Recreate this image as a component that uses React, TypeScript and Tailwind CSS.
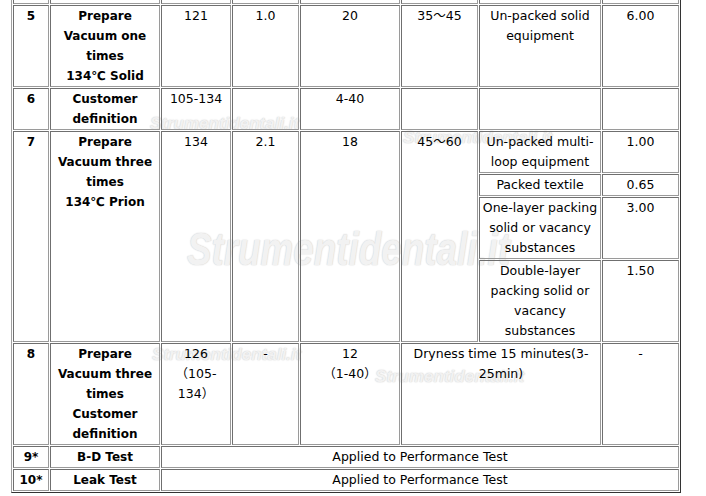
import React from "react";

const cell =
  "border border-[#6f6f6f] border-r-[#9a9a9a] border-b-[#9a9a9a] px-[1px] py-0 align-top text-center leading-[20px] whitespace-nowrap";
const head = `${cell} font-bold text-[12px]`;
const body = `${cell} text-[12.5px]`;

const mark =
  "absolute pointer-events-none select-none whitespace-nowrap font-['Liberation_Sans',sans-serif] font-bold italic leading-none text-[#efefef] opacity-80 [text-shadow:0_0_1px_#c4c4c4,0_0_2px_#dcdcdc]";

const App = () => {
  return (
    <div className="relative h-[496px] w-[706px] overflow-hidden bg-white text-black font-['DejaVu_Sans','Noto_Sans_CJK_JP',sans-serif]">
      {/* watermarks sit under the table text */}
      <span className={`${mark} left-[150px] top-[115px] text-[17px]`}>Strumentidentali.it</span>
      <span className={`${mark} left-[403px] top-[129px] text-[17px]`}>Strumentidentali.it</span>
      <span className={`${mark} left-[187px] top-[226px] origin-left scale-x-[0.8] text-[46px]`}>
        Strumentidentali.it
      </span>
      <span className={`${mark} left-[152px] top-[346px] text-[17px]`}>Strumentidentali.it</span>
      <span className={`${mark} left-[375px] top-[368px] text-[17px]`}>Strumentidentali.it</span>

      <table className="relative ml-[11px] mt-[-20px] w-[670px] table-fixed border-separate border-spacing-[1px] border border-t-[#a0a0a0] border-l-[#a0a0a0] border-r-[#333] border-b-[#333]">
        <tbody>
          <tr>
            <td className={`${body} w-[36px]`}>&nbsp;</td>
            <td className={`${body} w-[110px]`}>&nbsp;</td>
            <td className={`${body} w-[70px]`}>&nbsp;</td>
            <td className={`${body} w-[67px]`}>&nbsp;</td>
            <td className={`${body} w-[100px]`}>&nbsp;</td>
            <td className={`${body} w-[77px]`}>&nbsp;</td>
            <td className={`${body} w-[122px]`}>&nbsp;</td>
            <td className={`${body} w-[77px]`}>&nbsp;</td>
          </tr>
          <tr>
            <td className={head}>5</td>
            <td className={head}>
              Prepare<br />Vacuum one<br />times<br />134℃ Solid
            </td>
            <td className={body}>121</td>
            <td className={body}>1.0</td>
            <td className={body}>20</td>
            <td className={body}>35～45</td>
            <td className={body}>
              Un-packed solid<br />equipment
            </td>
            <td className={body}>6.00</td>
          </tr>
          <tr>
            <td className={head}>6</td>
            <td className={head}>
              Customer<br />definition
            </td>
            <td className={body}>105-134</td>
            <td className={body}></td>
            <td className={body}>4-40</td>
            <td className={body}></td>
            <td className={body}></td>
            <td className={body}></td>
          </tr>
          <tr>
            <td className={head} rowSpan={4}>7</td>
            <td className={head} rowSpan={4}>
              Prepare<br />Vacuum three<br />times<br />134℃ Prion
            </td>
            <td className={body} rowSpan={4}>134</td>
            <td className={body} rowSpan={4}>2.1</td>
            <td className={body} rowSpan={4}>18</td>
            <td className={body} rowSpan={4}>45～60</td>
            <td className={body}>
              Un-packed multi-<br />loop equipment
            </td>
            <td className={body}>1.00</td>
          </tr>
          <tr>
            <td className={body}>Packed textile</td>
            <td className={body}>0.65</td>
          </tr>
          <tr>
            <td className={body}>
              One-layer packing<br />solid or vacancy<br />substances
            </td>
            <td className={body}>3.00</td>
          </tr>
          <tr>
            <td className={body}>
              Double-layer<br />packing solid or<br />vacancy<br />substances
            </td>
            <td className={body}>1.50</td>
          </tr>
          <tr>
            <td className={head}>8</td>
            <td className={head}>
              Prepare<br />Vacuum three<br />times<br />Customer<br />definition
            </td>
            <td className={body}>
              126<br />（105-<br />134）
            </td>
            <td className={body}>-</td>
            <td className={body}>
              12<br />（1-40）
            </td>
            <td className={body} colSpan={2}>
              Dryness time 15 minutes(3-<br />25min)
            </td>
            <td className={body}>-</td>
          </tr>
          <tr>
            <td className={head}>9*</td>
            <td className={head}>B-D Test</td>
            <td className={body} colSpan={6}>
              Applied to Performance Test
            </td>
          </tr>
          <tr>
            <td className={head}>10*</td>
            <td className={head}>Leak Test</td>
            <td className={body} colSpan={6}>
              Applied to Performance Test
            </td>
          </tr>
        </tbody>
      </table>
    </div>
  );
};

export default App;
